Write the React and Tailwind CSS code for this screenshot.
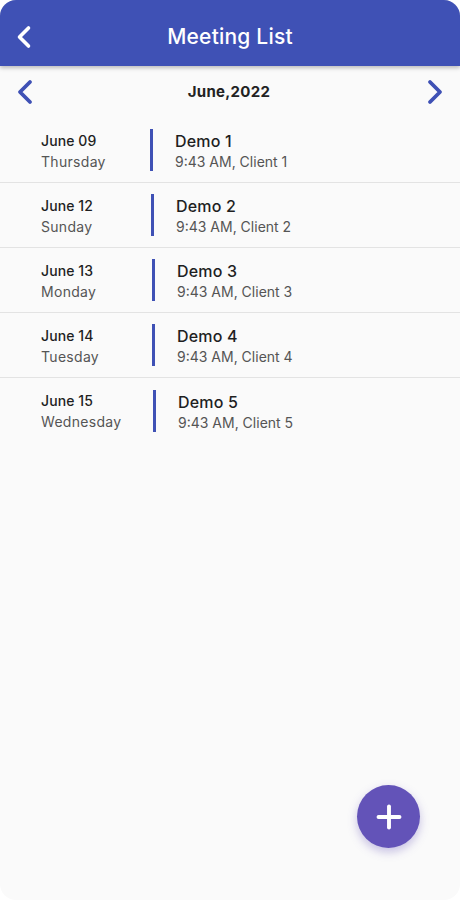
import { ChevronLeft, ChevronRight, Plus } from "lucide-react";

const meetings = [
  { date: "June 09", day: "Thursday", title: "Demo 1", sub: "9:43 AM, Client 1", bar: "ml-[109px]" },
  { date: "June 12", day: "Sunday", title: "Demo 2", sub: "9:43 AM, Client 2", bar: "ml-[110px]" },
  { date: "June 13", day: "Monday", title: "Demo 3", sub: "9:43 AM, Client 3", bar: "ml-[111px]" },
  { date: "June 14", day: "Tuesday", title: "Demo 4", sub: "9:43 AM, Client 4", bar: "ml-[111px]" },
  { date: "June 15", day: "Wednesday", title: "Demo 5", sub: "9:43 AM, Client 5", bar: "ml-[112px]" },
];

export default function App() {
  return (
    <div className="bg-white w-[460px] h-[900px]" style={{ fontFamily: "Inter, 'Noto Sans', sans-serif" }}>
      <div className="relative w-[460px] h-[900px] rounded-[16px] overflow-hidden bg-[#fafafa] flex flex-col">
        {/* Header */}
        <div className="h-[66px] bg-[#3f51b5] flex items-center pl-[6px] pr-3 pt-[8px] shadow-[0_2px_4px_rgba(0,0,0,0.25)] z-10 shrink-0">
          <ChevronLeft className="w-[36px] h-[36px] text-white" strokeWidth={2.4} />
          <div className="flex-1 text-center text-white text-[21px] font-medium mr-[30px] tracking-[0.2px]">Meeting List</div>
        </div>

        {/* Month switcher */}
        <div className="h-[52px] flex items-center justify-between px-[5px] shrink-0">
          <ChevronLeft className="w-[40px] h-[40px] text-[#3f51b5]" strokeWidth={2.3} />
          <div className="text-[15px] font-bold text-[#222] tracking-[0.3px] mr-[2px]">June,2022</div>
          <ChevronRight className="w-[40px] h-[40px] text-[#3f51b5]" strokeWidth={2.3} />
        </div>

        {/* List */}
        <div className="flex flex-col">
          {meetings.map((m, i) => (
            <div
              key={m.title}
              className={"h-[65px] flex items-center pl-[41px] " + (i < meetings.length - 1 ? "border-b border-[#e3e3e3]" : "")}
            >
              <div className="w-0 flex flex-col whitespace-nowrap pt-[2px]">
                <div className="text-[14px] font-medium text-[#1f1f1f] leading-[20px] tracking-[0.1px]">{m.date}</div>
                <div className="text-[14px] text-[#555] leading-[21px] tracking-[0.3px]">{m.day}</div>
              </div>
              <div className={"w-[3px] h-[42px] bg-[#3f51b5] shrink-0 " + m.bar}></div>
              <div className="flex flex-col ml-[22px] pt-[2px]">
                <div className="text-[16px] font-medium text-[#1f1f1f] leading-[22px] tracking-[0.2px]">{m.title}</div>
                <div className="text-[14px] text-[#555] leading-[20px]">{m.sub}</div>
              </div>
            </div>
          ))}
        </div>

        {/* FAB */}
        <button className="absolute left-[357px] top-[785px] w-[63px] h-[63px] rounded-full bg-[#6353b8] flex items-center justify-center shadow-[0_4px_10px_rgba(99,83,184,0.35)]">
          <Plus className="w-[36px] h-[36px] text-white" strokeWidth={2.6} />
        </button>
      </div>
    </div>
  );
}
